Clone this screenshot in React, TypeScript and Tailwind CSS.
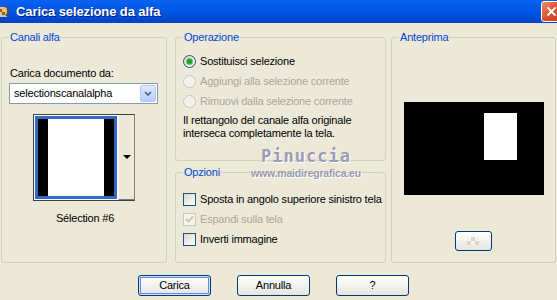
import React from 'react'

const font = { fontFamily: '"Liberation Sans", Arial, sans-serif' }

function Radio({ checked, disabled, label }: { checked?: boolean; disabled?: boolean; label: string }) {
  return (
    <div className="flex items-center h-[20px] gap-[4px] whitespace-nowrap">
      <span
        className={`shrink-0 w-[13px] h-[13px] rounded-full border flex items-center justify-center bg-gradient-to-br ${
          disabled ? 'border-[#CAC8BB] from-[#F2F1EA] to-[#F2F1EA]' : 'border-[#1C5180] from-[#DCD9C9] to-white'
        }`}
      >
        {checked && <span className="w-[5px] h-[5px] rounded-full bg-[#21A121] shadow-[0_0_0_1px_#5FC75F]" />}
      </span>
      <span className={disabled ? 'text-[#ACA899]' : 'text-black'}>{label}</span>
    </div>
  )
}

function Check({ checked, disabled, label }: { checked?: boolean; disabled?: boolean; label: string }) {
  return (
    <div className="flex items-center h-[20px] gap-[4px] whitespace-nowrap">
      <span
        className={`shrink-0 w-[13px] h-[13px] border flex items-center justify-center bg-gradient-to-br ${
          disabled ? 'border-[#CAC8BB] from-[#F5F4EA] to-[#F5F4EA]' : 'border-[#1C5180] from-[#DCD9C9] to-white'
        }`}
      >
        {checked && (
          <svg width="9" height="9" viewBox="0 0 9 9">
            <path d="M1 4 L3.5 6.5 L8 1.5" stroke={disabled ? '#CAC8BB' : '#21A121'} strokeWidth="2" fill="none" />
          </svg>
        )}
      </span>
      <span className={disabled ? 'text-[#ACA899]' : 'text-black'}>{label}</span>
    </div>
  )
}

function Group({ title, className, children }: { title: string; className: string; children?: React.ReactNode }) {
  return (
    <fieldset className={`min-w-0 border border-[#D0D0BF] rounded-[3px] px-[7px] ${className}`}>
      <legend className="px-[1px] text-[#0046D5] leading-[13px]">{title}</legend>
      {children}
    </fieldset>
  )
}

function XpButton({ label, primary }: { label: string; primary?: boolean }) {
  return (
    <button
      className={`w-[73px] h-[21px] rounded-[3px] border border-[#003C74] bg-gradient-to-b from-white to-[#E6E5DD] text-black text-[11px] ${
        primary ? 'shadow-[inset_0_0_0_1px_#CEE7FF,inset_0_0_0_2px_#6982EE]' : ''
      }`}
    >
      {label}
    </button>
  )
}

export default function App() {
  return (
    <div className="w-[557px] h-[300px] overflow-hidden relative bg-[#ECE9D8] text-[11px] tracking-[-0.2px]" style={font}>
      {/* title bar */}
      <div className="h-[23px] bg-gradient-to-b from-[#0A62F2] via-[#0055E5] to-[#0043C6] flex items-center relative">
        <svg width="12" height="16" viewBox="0 0 12 16" className="ml-[-2px]">
          <rect x="0" y="3" width="9" height="10" fill="#E9C08A" />
          <rect x="1" y="5" width="3" height="3" fill="#D83B2A" />
          <rect x="4" y="8" width="3" height="3" fill="#2F8F3A" />
          <path d="M7 2 L11 6 L8 12" stroke="#6B4E2E" strokeWidth="1.5" fill="none" />
        </svg>
        <span className="ml-[6px] text-white font-bold text-[13px] tracking-[-0.1px] [text-shadow:1px_1px_0_#0A1E7A]">
          Carica selezione da alfa
        </span>
        <div className="ml-auto mr-[-5px] w-[21px] h-[21px] rounded-[3px] border border-white bg-gradient-to-br from-[#F08A6C] via-[#E0502F] to-[#C23A1C] flex items-center justify-center">
          <svg width="11" height="11" viewBox="0 0 11 11">
            <path d="M1.5 1.5 L9.5 9.5 M9.5 1.5 L1.5 9.5" stroke="white" strokeWidth="2" />
          </svg>
        </div>
      </div>

      <div className="flex pt-[8px] pl-[1px]">
        <Group title="Canali alfa" className="w-[166px] shrink-0 h-[232px] pt-[22px]">
          <div className="leading-[14px] pl-[1px]">Carica documento da:</div>
          <div className="mt-[3px] h-[21px] w-[149px] border border-[#7F9DB9] bg-white flex items-center pl-[4px] pr-[1px]">
            <span className="flex-1">selectionscanalalpha</span>
            <span className="w-[16px] h-[17px] rounded-[2px] bg-gradient-to-b from-[#E3EBFD] to-[#B6CBF8] border border-[#B4C8F6] flex items-center justify-center">
              <svg width="8" height="5" viewBox="0 0 8 5">
                <path d="M1 1 L4 4 L7 1" stroke="#4D6185" strokeWidth="1.6" fill="none" />
              </svg>
            </span>
          </div>
          <div className="mt-[10px] mx-auto w-[102px] h-[87px] border border-[#404040] border-r-[#808080] bg-white flex">
            <div className="w-[84px] h-[85px] p-[1px]">
              <svg width="82" height="83" viewBox="0 0 82 83">
                <rect x="0" y="0" width="82" height="83" fill="#316AC5" />
                <rect x="3" y="3" width="76" height="77" fill="black" />
                <rect x="13" y="3" width="56" height="77" fill="white" />
              </svg>
            </div>
            <div className="flex-1 bg-[#ECE9D8] border-l border-[#F6F5EF] border-b border-b-[#7A7A7A] flex items-center justify-center">
              <svg width="8" height="5" viewBox="0 0 8 5">
                <path d="M0 0 L8 0 L4 4 Z" fill="black" />
              </svg>
            </div>
          </div>
          <div className="mt-[9px] text-center pl-[2px]">Sélection #6</div>
        </Group>

        <div className="ml-[8px] w-[211px] shrink-0 flex flex-col gap-[5px]">
          <Group title="Operazione" className="h-[130px] pt-[7px]">
            <Radio checked label="Sostituisci selezione" />
            <Radio disabled label="Aggiungi alla selezione corrente" />
            <Radio disabled label="Rimuovi dalla selezione corrente" />
            <div className="mt-[3px] leading-[13px] whitespace-nowrap">
              Il rettangolo del canale alfa originale
              <br />
              interseca completamente la tela.
            </div>
          </Group>
          <Group title="Opzioni" className="h-[97px] pt-[10px]">
            <Check label="Sposta in angolo superiore sinistro tela" />
            <Check disabled checked label="Espandi sulla tela" />
            <Check label="Inverti immagine" />
          </Group>
        </div>

        <Group title="Anteprima" className="ml-[5px] w-[165px] shrink-0 h-[232px] pt-[58px] flex flex-col items-center">
          <svg width="140" height="93" viewBox="0 0 140 93" className="mx-auto">
            <rect width="140" height="93" fill="black" />
            <rect x="80" y="11" width="33" height="47" fill="white" />
          </svg>
          <div className="mx-auto mt-[36px] w-[37px] h-[20px] rounded-[3px] border border-[#003C74] bg-gradient-to-b from-white to-[#E6E5DD] flex items-center justify-center">
            <svg width="14" height="8" viewBox="0 0 14 8">
              <rect x="0" y="0" width="4" height="4" fill="#F4F4F0" />
              <rect x="4" y="4" width="4" height="4" fill="#F4F4F0" />
              <rect x="8" y="0" width="4" height="4" fill="#F4F4F0" />
              <rect x="4" y="0" width="4" height="4" fill="#DAD8CE" />
              <rect x="0" y="4" width="4" height="4" fill="#DAD8CE" />
              <rect x="8" y="4" width="4" height="4" fill="#DAD8CE" />
            </svg>
          </div>
        </Group>
      </div>

      <div className="flex gap-[26px] mt-[12px] pl-[138px]">
        <XpButton label="Carica" primary />
        <XpButton label="Annulla" />
        <XpButton label="?" />
      </div>

      {/* watermark */}
      <div className="absolute left-[246px] top-[146px] w-[120px] text-center pointer-events-none">
        <div className="text-[17px] font-bold tracking-[1px] text-[#9C9CB4] leading-[20px] [text-shadow:1px_1px_0_#FFFFFF]" style={{ fontFamily: '"DejaVu Sans Mono", monospace' }}>
          Pinuccia
        </div>
        <div className="text-[10.5px] font-bold text-[#9A9AAE] leading-[12px] mt-[1px] [text-shadow:1px_1px_0_#FFFFFF]">
          www.maidiregrafica.eu
        </div>
      </div>
    </div>
  )
}
